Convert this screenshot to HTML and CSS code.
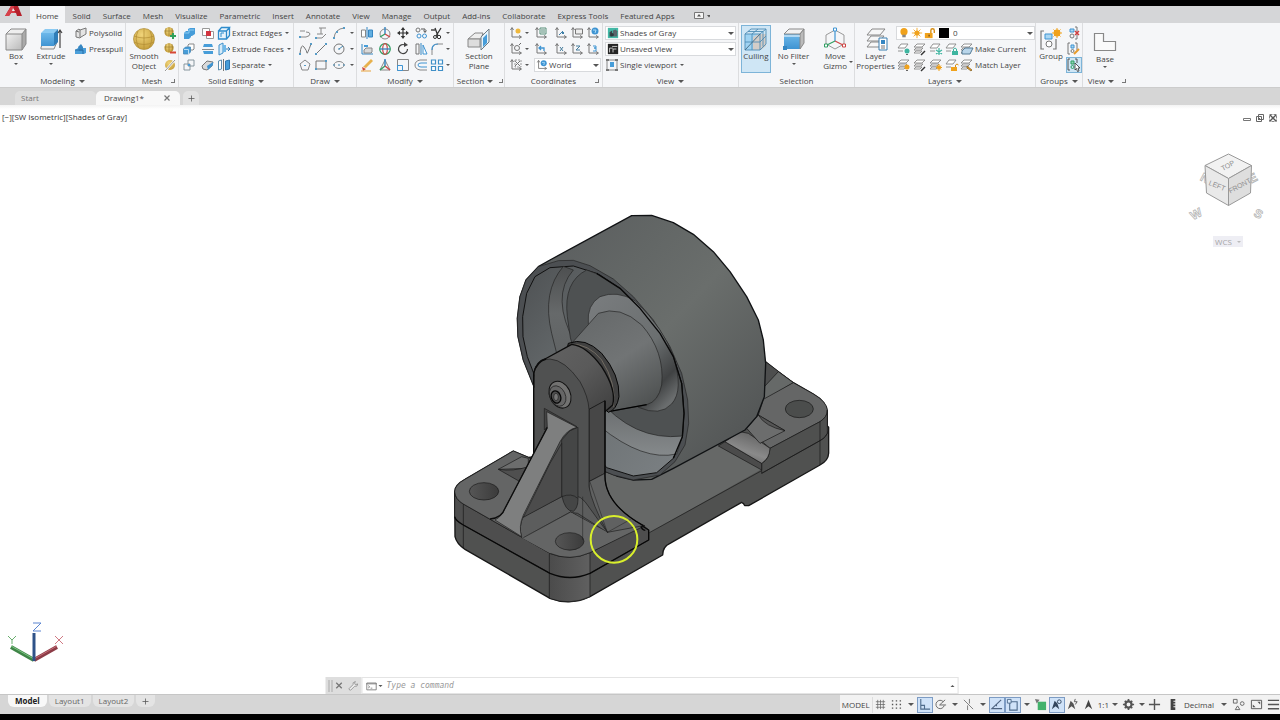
FILE: index.html
```html
<!DOCTYPE html>
<html lang="en">
<head>
<meta charset="utf-8">
<title>Drawing1</title>
<link rel="stylesheet" href="styles.css">
</head>
<body>
<svg class="sprite" aria-hidden="true">
<defs>
<linearGradient id="gBlue" x1="0" y1="0" x2="0" y2="1"><stop offset="0" stop-color="#6db8ea"/><stop offset="1" stop-color="#3f94d2"/></linearGradient>
<radialGradient id="gGold" cx=".4" cy=".3" r=".8"><stop offset="0" stop-color="#f0d47a"/><stop offset="1" stop-color="#c29a35"/></radialGradient>
<linearGradient id="gGrey" x1="0" y1="0" x2="1" y2="1"><stop offset="0" stop-color="#f2f2f2"/><stop offset="1" stop-color="#b9b9b9"/></linearGradient>
</defs>
<symbol id="box" viewBox="0 0 24 24"><path d="M2 7h16v16H2z" fill="url(#gGrey)"/><path d="M2 7l5-5h15l-4 5z" fill="#eee"/><path d="M18 7l4-5v15l-4 6z" fill="#aaa"/><path d="M2 7h16v16H2zM2 7l5-5h15l-4 5M22 2v15l-4 6" fill="none" stroke="#888"/></symbol>
<symbol id="extrude" viewBox="0 0 24 24"><path d="M2 20l4-5h12l-3 7H2z" fill="#eee" stroke="#888"/><path d="M2 6h13v13H2z" fill="url(#gBlue)"/><path d="M2 6l4-4h13l-4 4z" fill="#8bcaf2"/><path d="M15 6l4-4v13l-4 4z" fill="#2f7db8"/><path d="M21 21V4m-2 2l2-3 2 3" fill="none" stroke="#444" stroke-width="1.200"/></symbol>
<symbol id="polysolid" viewBox="0 0 14 14"><path d="M2 5l3-2 1 1 6-2v6l-5 3-1 1-4-1z" fill="#e4e4e4" stroke="#777"/><path d="M6 4v7M2 5l3 1" stroke="#777" fill="none"/></symbol>
<symbol id="presspull" viewBox="0 0 14 14"><path d="M1 8l3-2h8v5l-2 1H1z" fill="#4b9fda"/><path d="M4 5l3-3 2 3v4H5z" fill="#3586c2"/><path d="M1 8h8v4" fill="none" stroke="#2a6ea5"/></symbol>
<symbol id="sphere" viewBox="0 0 24 24"><circle cx="12" cy="12" r="10.500" fill="url(#gGold)" stroke="#ab8a35" stroke-width=".7"/><path d="M2 9q10 4 20 0M2 15q10 5 20 0M12 2v20M6 4q-4 8 1 17M18 4q4 8-1 17" fill="none" stroke="#b18d34" stroke-width=".7"/></symbol>
<symbol id="meshplus" viewBox="0 0 14 14"><circle cx="6" cy="6" r="4.700" fill="url(#gGold)"/><path d="M1.500 5h9M6 1v9M3 2q-1 4 0 7M9 2q1 4 0 7" stroke="#95762a" stroke-width=".6" fill="none"/><path d="M10 7v6M7 10h6" stroke="#2fa05a" stroke-width="2"/></symbol>
<symbol id="meshminus" viewBox="0 0 14 14"><circle cx="6" cy="6" r="4.700" fill="url(#gGold)"/><path d="M1.500 5h9M6 1v9M3 2q-1 4 0 7M9 2q1 4 0 7" stroke="#95762a" stroke-width=".6" fill="none"/><path d="M7 10.500h6" stroke="#d74736" stroke-width="2"/></symbol>
<symbol id="meshno" viewBox="0 0 14 14"><circle cx="7" cy="7" r="5" fill="url(#gGold)"/><path d="M2 13L12 2" stroke="#fff" stroke-width="2"/><path d="M2 13L12 2" stroke="#777" stroke-width=".8"/></symbol>
<symbol id="union" viewBox="0 0 14 14"><path d="M2 7l2-2h2V3l2-1h5v6l-3 2H9v1l-2 2H2z" fill="#479dd9"/><path d="M2 7h5V4h5" stroke="#8dccf2" fill="none"/></symbol>
<symbol id="subtract" viewBox="0 0 14 14"><path d="M6 3l1-1h5v5l-1 1H6z" fill="#fff" stroke="#888"/><path d="M1.500 7l2-2h5v5l-2 2h-5z" fill="#479dd9" stroke="#4688b6" stroke-width=".8"/><path d="M2 7.500h4.500V12" stroke="#b9def5" fill="none"/></symbol>
<symbol id="intersect" viewBox="0 0 14 14"><path d="M6 2h6v6H6zM2 6h6v6H2z" fill="none" stroke="#7d8c95" stroke-width=".9"/><path d="M6 6h2v2H6z" fill="#479dd9"/></symbol>
<symbol id="interfere" viewBox="0 0 14 14"><path d="M1.500 2.500h7v7h-7zM5.500 5.500h7v7h-7z" fill="#fff" stroke="#999"/><path d="M5 5h5v5H5z" fill="#d2343f"/></symbol>
<symbol id="slice" viewBox="0 0 14 14"><path d="M3 2h8l1 3H2zM2 9h10v3H3z" fill="#479dd9"/><path d="M1 7.500h12" stroke="#8a8a8a"/></symbol>
<symbol id="thicken" viewBox="0 0 14 14"><path d="M1 8l5-5 6 1-1 4-5 4-4-1z" fill="#d9d9d9" stroke="#777"/><path d="M6 8l6-4v3l-5 5z" fill="#3f94d2"/></symbol>
<symbol id="xedges" viewBox="0 0 14 14"><path d="M1.500 5h8v8h-8zM1.500 5l3-3.500h8l-3 3.500M12.500 1.500v8l-3 3.500" fill="#e7f4fc" stroke="#2f8ccc" stroke-width="1.300"/><path d="M4 11V7h3" fill="none" stroke="#2f8ccc"/></symbol>
<symbol id="xfaces" viewBox="0 0 14 14"><path d="M2 3l4-2v10l-4 2z" fill="#d6ebf8" stroke="#3c8fca"/><path d="M6 3h3v7H6" fill="#6fb8e8"/><path d="M9 7h4M11 5l2 2-2 2" stroke="#2f78b0" fill="none"/></symbol>
<symbol id="separate" viewBox="0 0 14 14"><path d="M1.500 3l3-1v9l-3 1z" fill="#fff" stroke="#5d8eaf"/><path d="M6.500 1v12" stroke="#777"/><path d="M8.500 3l4-1v9l-4 1z" fill="#479dd9" stroke="#2f78b0"/></symbol>
<symbol id="pline" viewBox="0 0 14 14"><path d="M2 11h6q4-1 4-3t-4-2M2 5h5" fill="none" stroke="#888"/><path d="M1 10h2v2H1z" fill="#579cc7"/></symbol>
<symbol id="poly3d" viewBox="0 0 14 14"><path d="M5 2h7M7 2v6M3 8h6M2 12h6l4-4" fill="none" stroke="#888"/><path d="M1 11h2v2H1z" fill="#579cc7"/></symbol>
<symbol id="arc" viewBox="0 0 14 14"><path d="M2 12Q3 3 12 2" fill="none" stroke="#888"/><path d="M1 11h2v2H1zM4 5h2v2H4zM11 1h2v2h-2z" fill="#579cc7"/></symbol>
<symbol id="spline" viewBox="0 0 14 14"><path d="M2 12Q3 1 6 5t3 6 4-9" fill="none" stroke="#777"/><path d="M1 11h2v2H1zM12 1h2v2h-2z" fill="#579cc7"/></symbol>
<symbol id="line" viewBox="0 0 14 14"><path d="M2 12L12 2" stroke="#777"/><path d="M1 11h2v2H1zM11 1h2v2h-2z" fill="#579cc7"/></symbol>
<symbol id="circle" viewBox="0 0 14 14"><circle cx="7" cy="7" r="5" fill="none" stroke="#777"/><path d="M7 7l4-3M6 7h2" stroke="#4187b1"/></symbol>
<symbol id="polygon" viewBox="0 0 14 14"><path d="M7 2l5 4-2 6H4L2 6z" fill="none" stroke="#888"/><path d="M6 7h2v1H6z" fill="#579cc7"/></symbol>
<symbol id="rect" viewBox="0 0 14 14"><path d="M2 3h10v8H2z" fill="none" stroke="#777"/><path d="M1 10h2v2H1zM11 2h2v2h-2z" fill="#579cc7"/></symbol>
<symbol id="ellipse" viewBox="0 0 14 14"><ellipse cx="7" cy="7" rx="5" ry="3.500" fill="none" stroke="#888"/><path d="M6 7h2M1 7h2M11 7h2" stroke="#4187b1"/></symbol>
<symbol id="mirror3d" viewBox="0 0 14 14"><path d="M1.500 4h4v7h-4z" fill="#fff" stroke="#888"/><path d="M7 1v12" stroke="#3586c2"/><path d="M8.500 4h4v7h-4z" fill="#62afe1" stroke="#3586c2"/></symbol>
<symbol id="gizmomove" viewBox="0 0 14 14"><circle cx="7" cy="8" r="5" fill="none" stroke="#888"/><path d="M7 8V1" stroke="#3586c2" stroke-width="1.400"/><path d="M7 8l-5 3" stroke="#2f9e62" stroke-width="1.400"/><path d="M7 8l5 3" stroke="#cf4545" stroke-width="1.400"/></symbol>
<symbol id="move" viewBox="0 0 14 14"><path d="M7 3v8M3 7h8" stroke="#333" stroke-width="1.200"/><path d="M7 1l2.200 3H4.800zM7 13l2.200-3H4.800zM1 7l3-2.200v4.400zM13 7l-3-2.200v4.400z" fill="#333"/></symbol>
<symbol id="copy" viewBox="0 0 14 14"><circle cx="4" cy="4" r="2" fill="none" stroke="#777"/><circle cx="5" cy="10" r="2" fill="none" stroke="#3f94d2"/><circle cx="10.500" cy="10" r="2" fill="none" stroke="#3f94d2"/><path d="M7 3h4v3M9.500 4.500l1.500 2 1.500-2" fill="none" stroke="#555"/></symbol>
<symbol id="trim" viewBox="0 0 14 14"><path d="M5 2l3 8M11 2L6 10" stroke="#333" stroke-width="1.300"/><circle cx="9" cy="11" r="1.700" fill="none" stroke="#333"/><circle cx="5" cy="11" r="1.500" fill="none" stroke="#333"/><path d="M1 4h4" stroke="#444" stroke-width="1.500"/></symbol>
<symbol id="align3d" viewBox="0 0 14 14"><path d="M2 2v10h11" stroke="#3586c2" fill="none"/><path d="M4 8l2-2h6v4l-1 1H4z" fill="#d9d9d9" stroke="#888"/><path d="M4 3h4v2H4z" fill="#479dd9"/></symbol>
<symbol id="rotate3d" viewBox="0 0 14 14"><circle cx="7" cy="7" r="5.300" fill="none" stroke="#2f9e62" stroke-width="1.200"/><ellipse cx="7" cy="7" rx="2.300" ry="5.300" fill="none" stroke="#c94a4a" stroke-width="1.200"/><path d="M2 7h10" stroke="#3586c2" stroke-width="1.300"/></symbol>
<symbol id="rotate" viewBox="0 0 14 14"><path d="M9 3A4.500 4.500 0 1 0 11.500 7" fill="none" stroke="#444" stroke-width="1.200"/><path d="M8 0l4 3-4 2z" fill="#444"/></symbol>
<symbol id="mirror" viewBox="0 0 14 14"><path d="M2 2h3v10H2z" fill="none" stroke="#777"/><path d="M7 1v12" stroke="#3586c2"/><path d="M9 3v9h4z" fill="#fff" stroke="#3f94d2"/></symbol>
<symbol id="fillet" viewBox="0 0 14 14"><path d="M2 13V8q0-6 6-6h5" fill="none" stroke="#888"/><path d="M2 8q0-6 6-6" fill="none" stroke="#3f94d2" stroke-width="1.200"/></symbol>
<symbol id="erase" viewBox="0 0 14 14"><path d="M3 9l8-8 2 2-7 7z" fill="#e7b14d"/><path d="M2 9l4 2-3 2z" fill="#d04b3c"/><path d="M1 13h10" stroke="#e7a33d"/></symbol>
<symbol id="scale3d" viewBox="0 0 14 14"><path d="M7 2L2 12h10z" fill="none" stroke="#888"/><path d="M7 8V1" stroke="#3586c2" stroke-width="1.500"/><path d="M7 8l-5 4" stroke="#2f9e62" stroke-width="1.500"/><path d="M7 8l5 4" stroke="#cf4545" stroke-width="1.500"/></symbol>
<symbol id="scale" viewBox="0 0 14 14"><path d="M1.500 1.500h11v11h-11z" fill="none" stroke="#888"/><path d="M1.500 7.500h5v5h-5z" fill="none" stroke="#3f94d2"/></symbol>
<symbol id="offset" viewBox="0 0 14 14"><path d="M13 2H6Q1 3 1 7t5 5h7" fill="none" stroke="#888"/><path d="M13 5H7Q4 5 4 7t3 2h6" fill="none" stroke="#3f94d2"/></symbol>
<symbol id="array" viewBox="0 0 14 14"><path d="M1.500 2h4v4h-4zM8.500 2h4v4h-4zM1.500 8.500h4v4h-4zM8.500 8.500h4v4h-4z" fill="#fff" stroke="#3f8fc7" stroke-width="1.200"/></symbol>
<symbol id="section" viewBox="0 0 24 24"><path d="M1 12l7-6h8l-2 6z" fill="#eee" stroke="#888"/><path d="M1 12h12v8H1z" fill="#ddd" stroke="#888"/><path d="M14 10l8-8v13l-8 8z" fill="#e7f4fc" stroke="#6f7b82"/><path d="M16 11l4-4v9l-4 4z" fill="#479dd9"/></symbol>
<symbol id="axes" viewBox="0 0 14 14"><path d="M3 2v9h9M1.500 4L3 1.500 4.500 4M10 9.500L12.500 11 10 12.500" fill="none" stroke="#777" stroke-width="1"/></symbol>
<symbol id="ucsnew" viewBox="0 0 14 14"><use href="#axes"/><circle cx="9" cy="5" r="2.500" fill="#efb83c"/></symbol>
<symbol id="ucsnamed" viewBox="0 0 14 14"><use href="#axes"/><path d="M6 2h6v6H6zM7 4h4M7 6h4" fill="none" stroke="#578e79"/></symbol>
<symbol id="ucsorigin" viewBox="0 0 14 14"><use href="#axes"/><path d="M5 9l4-4" stroke="#3f7fa8"/><path d="M8 6h2v2H8z" fill="#3f7fa8"/></symbol>
<symbol id="ucsview" viewBox="0 0 14 14"><use href="#axes"/><path d="M5.500 3h7v5h-7z" fill="#eee" stroke="#777"/></symbol>
<symbol id="ucsworld" viewBox="0 0 14 14"><use href="#axes"/><circle cx="9" cy="5" r="3.500" fill="#3f94d2"/><path d="M7 4h3l-1 3" stroke="#aadbf8" fill="none"/></symbol>
<symbol id="ucsrot" viewBox="0 0 14 14"><use href="#axes"/><circle cx="8" cy="6" r="2.500" fill="none" stroke="#777"/><path d="M10 3l2-2" stroke="#666"/></symbol>
<symbol id="ucsprev" viewBox="0 0 14 14"><use href="#axes"/><path d="M5 6h5v3M7 4L5 6l2 2" stroke="#3f94d2" stroke-width="1.300" fill="none"/></symbol>
<symbol id="ucsx" viewBox="0 0 14 14"><use href="#axes"/><path d="M6 5l3 4M9 5L6 9" stroke="#467c9c"/></symbol>
<symbol id="ucsz" viewBox="0 0 14 14"><use href="#axes"/><path d="M6 4h4L6 8h4" fill="none" stroke="#467c9c"/></symbol>
<symbol id="ucs3" viewBox="0 0 14 14"><use href="#axes"/><path d="M7 4h3v2H8h2v3H7" fill="none" stroke="#3f94d2"/></symbol>
<symbol id="ucsicon" viewBox="0 0 14 14"><use href="#axes"/><path d="M6 3l5 5M11 3L6 8" stroke="#777"/><path d="M6 2h6v7H6z" fill="none" stroke="#999" stroke-dasharray="2 1"/></symbol>
<symbol id="shades" viewBox="0 0 14 14"><path d="M1 1h12v12H1z" fill="#43b9a7"/><path d="M3 11V6l3-2v7z" fill="#39464b"/><path d="M7 4l3-1 2 2v6H7z" fill="#59656b"/><circle cx="6" cy="9" r="2" fill="#2e393e"/></symbol>
<symbol id="unsaved" viewBox="0 0 14 14"><path d="M1 1h12v12H1z" fill="#252525"/><path d="M3 11V6h4M7 11V7h4M6 4h6" stroke="#ddd" fill="none"/></symbol>
<symbol id="viewport" viewBox="0 0 14 14"><path d="M2 2h10v10H2z" fill="none" stroke="#888"/><path d="M1 1h3v2H1zM10 1h3v2h-3zM1 11h3v2H1zM10 11h3v2h-3z" fill="#777"/><path d="M5 4h4v5H5z" fill="#479dd9"/></symbol>
<symbol id="culling" viewBox="0 0 24 24"><path d="M1 7h15v16H1z" fill="#9fd3f2"/><path d="M9 10l6-3h7v12l-5 4H9z" fill="#d3cdc8"/><path d="M1 7l6-5h15v15l-6 6H1zM1 7h15v16M16 7l6-5M8 7v16M1 15h15l6-6M8 7l6-5M4 4.500h15v15" fill="none" stroke="#4f8db5" stroke-width=".9"/><path d="M1 23L16 7" stroke="#4c718a"/></symbol>
<symbol id="nofilter" viewBox="0 0 24 24"><path d="M2 7h16v15H2z" fill="url(#gBlue)"/><path d="M2 7l5-5h15l-4 5z" fill="#f2f2f2" stroke="#888"/><path d="M18 7l4-5v14l-4 6z" fill="#bbb" stroke="#888"/><path d="M2 9h16" stroke="#fff"/><path d="M1 19h4v4H1z" fill="#3586c2"/></symbol>
<symbol id="gizmo" viewBox="0 0 24 24"><path d="M12 3L3 8v9l9 5 9-5V8z" fill="none" stroke="#999"/><path d="M12 14V4" stroke="#3f94d2" stroke-width="1.200"/><path d="M12 14l-8 4" stroke="#2f9e62" stroke-width="1.200"/><path d="M12 14l8 4" stroke="#cf4545" stroke-width="1.200"/><path d="M10.500 1h3v3h-3z" fill="#fff" stroke="#3f94d2"/><path d="M1.500 17h3v3h-3z" fill="#fff" stroke="#2f9e62"/><path d="M19.500 17h3v3h-3z" fill="#fff" stroke="#cf4545"/></symbol>
<symbol id="layerprops" viewBox="0 0 24 24"><path d="M3 8l5-6h13l-5 6zM3 14l4-5h13l-4 5zM3 20l4-5h12l-4 5z" fill="#f7f7f7" stroke="#888"/><path d="M15 11h8v12h-8z" fill="#fff" stroke="#3b7fb0"/><path d="M17 13h4v4h-4z" fill="#3586c2"/><path d="M17 19h4M17 21h4" stroke="#777"/></symbol>
<symbol id="bulb" viewBox="0 0 14 14"><circle cx="7" cy="5.500" r="4.200" fill="#f0a21c"/><path d="M5 9h4v3H5z" fill="#888"/></symbol>
<symbol id="sun" viewBox="0 0 14 14"><circle cx="7" cy="7" r="3" fill="#f0a21c"/><path d="M7 1v12M1 7h12M3 3l8 8M11 3l-8 8" stroke="#f0a21c"/></symbol>
<symbol id="unlock" viewBox="0 0 14 14"><path d="M1 7h9v6H1z" fill="#f0a21c"/><path d="M8 7V4q0-2 2-2t2 2v3" fill="none" stroke="#d58c12" stroke-width="1.600"/><path d="M5 9h2v2H5z" fill="#8d6220"/></symbol>
<symbol id="sheet" viewBox="0 0 14 14"><path d="M1 6l3-4h7L8 6zM1 9h5" fill="#fff" stroke="#888" stroke-width=".9"/></symbol>
<symbol id="sheets" viewBox="0 0 14 14"><path d="M1 5l3-3h8L9 5zM1 8l2-2h7L8 8zM1 11l2-2h6l-2 2z" fill="#fff" stroke="#888" stroke-width=".9"/></symbol>
<symbol id="layoff" viewBox="0 0 14 14"><use href="#sheet"/><circle cx="10" cy="9" r="2.500" fill="#3eb5a0"/><path d="M9 12h2v1H9z" fill="#666"/></symbol>
<symbol id="layiso" viewBox="0 0 14 14"><use href="#sheets"/><path d="M8 13l4-4" stroke="#333" stroke-width="1.500"/></symbol>
<symbol id="layfrz" viewBox="0 0 14 14"><use href="#sheet"/><path d="M10 6v7M7 8l6 4M13 8l-6 4" stroke="#3eb5a0" stroke-width="1.200"/></symbol>
<symbol id="laylock" viewBox="0 0 14 14"><use href="#sheet"/><path d="M7 9h6v4H7z" fill="#3eb5a0"/><path d="M8.500 9V7q1.500-2 3 0v2" fill="none" stroke="#3eb5a0"/></symbol>
<symbol id="laycur" viewBox="0 0 14 14"><use href="#sheets"/><path d="M2 9l3-3h8l-3 6H2z" fill="#b8d5ea" stroke="#557a94"/></symbol>
<symbol id="layon" viewBox="0 0 14 14"><use href="#sheets"/><circle cx="10" cy="9" r="2.500" fill="#f0a21c"/><path d="M9 12h2v1H9z" fill="#666"/></symbol>
<symbol id="laythw" viewBox="0 0 14 14"><use href="#sheets"/><circle cx="10" cy="9.500" r="2" fill="#f0a21c"/><path d="M10 6v7M7 9.500h6M8 7.500l4 4M12 7.500l-4 4" stroke="#f0a21c"/></symbol>
<symbol id="layunl" viewBox="0 0 14 14"><use href="#sheet"/><path d="M6 9h6v4H6z" fill="#f0a21c"/><path d="M10.500 9V7q1.500-2 3 0" fill="none" stroke="#d58c12"/></symbol>
<symbol id="laymatch" viewBox="0 0 14 14"><use href="#sheets"/><path d="M7 8l5 4-1 1-4-3z" fill="#f0a21c" stroke="#7a5a2a" stroke-width=".7"/></symbol>
<symbol id="group" viewBox="0 0 24 24"><path d="M5 4H2v18h3M14 22h3V12" fill="none" stroke="#777" stroke-width="1.200"/><path d="M6 7h7v5H6z" fill="#a8d6f3" stroke="#3f94d2"/><circle cx="10" cy="17" r="3" fill="#fff" stroke="#777"/><circle cx="18" cy="6" r="3.400" fill="#f0a21c"/><path d="M18 1v10M13 6h10M14.500 2.500l7 7M21.500 2.500l-7 7" stroke="#f0a21c"/></symbol>
<symbol id="ungroup" viewBox="0 0 14 14"><path d="M3 3h4v3H3z" fill="#a8d6f3" stroke="#3f94d2"/><circle cx="5" cy="10" r="2" fill="none" stroke="#777"/><path d="M8 1h2v12H8" fill="none" stroke="#777"/><path d="M8 5l4 4M12 5L8 9" stroke="#d33b3b" stroke-width="1.400"/></symbol>
<symbol id="groupedit" viewBox="0 0 14 14"><path d="M3 1H1v11h2M8 1h2v7" fill="none" stroke="#777"/><path d="M4 3h3v3H4z" fill="#a8d6f3" stroke="#3f94d2"/><circle cx="5.500" cy="9" r="1.500" fill="none" stroke="#777"/><path d="M7 12l5-5" stroke="#e89c2b" stroke-width="2"/></symbol>
<symbol id="groupsel" viewBox="0 0 14 14"><path d="M3 1H1v11h2M8 1h2v4" fill="none" stroke="#555"/><path d="M4 3h3v3H4z" fill="#8fd3b4" stroke="#2f9e62"/><circle cx="5.500" cy="9" r="1.500" fill="none" stroke="#2f9e62"/><path d="M8 5l5 5H11l1 3-1.500.5-1-3L8 12z" fill="#fff" stroke="#333" stroke-width=".8"/></symbol>
<symbol id="base" viewBox="0 0 24 24"><path d="M1.500 3.500h9v8h12v9h-21z" fill="#fafafa" stroke="#888" stroke-width="1.200"/></symbol>
<symbol id="grid" viewBox="0 0 14 14"><path d="M4 2v10M7 2v10M10 2v10M2 4h10M2 7h10M2 10h10" stroke="#666" stroke-width=".8"/></symbol>
<symbol id="dots" viewBox="0 0 14 14"><path d="M2 3h10M2 7h10M2 11h10" stroke="#555" stroke-width="1.400" stroke-dasharray="1.500 2.700"/></symbol>
<symbol id="ortho" viewBox="0 0 14 14"><path d="M3 1v11h10M3 8h4v4" fill="none" stroke="#4f6c8c" stroke-width="1.200"/></symbol>
<symbol id="polar" viewBox="0 0 14 14"><path d="M10 4A4.500 4.500 0 1 0 11 8M6 7.500h7M6 7.500l6-5.500" fill="none" stroke="#666" stroke-width="1"/></symbol>
<symbol id="iso" viewBox="0 0 14 14"><path d="M2 2l10 10M8 1v5M6 13V8" fill="none" stroke="#777" stroke-width="1"/></symbol>
<symbol id="otrack" viewBox="0 0 14 14"><path d="M12 2L2 11.500h11M7 7v2" fill="none" stroke="#4f6480" stroke-width="1.200"/></symbol>
<symbol id="osnap" viewBox="0 0 14 14"><path d="M4 4h8v9H4z" fill="none" stroke="#4f6c8c" stroke-width="1.200"/><path d="M1.500 1.500h4v4h-4z" fill="#d8e9fb" stroke="#4f6c8c"/></symbol>
<symbol id="cycle" viewBox="0 0 14 14"><path d="M4 4h9v9H4z" fill="#43b26b"/><path d="M1 1l5 1-3 4z" fill="#777"/></symbol>
<symbol id="annoa" viewBox="0 0 14 14"><path d="M7 2L3 12l4-3 4 3z" fill="#444"/></symbol>
<symbol id="annovis" viewBox="0 0 14 14"><path d="M5 3L2 12l4-3 4 3-2-6z" fill="#33465e"/><circle cx="10" cy="4" r="2" fill="none" stroke="#33465e"/></symbol>
<symbol id="annoauto" viewBox="0 0 14 14"><path d="M5 3L2 12l4-3 4 3-2-6z" fill="#555"/><path d="M10 1l-1 3h3l-2 3" fill="none" stroke="#555"/></symbol>
<symbol id="gear" viewBox="0 0 14 14"><circle cx="7" cy="7" r="3.300" fill="none" stroke="#555" stroke-width="2.400"/><path d="M7 1v2.500M7 10.500V13M1 7h2.500M10.500 7H13M3 3l1.500 1.500M9.500 9.500L11 11M11 3L9.500 4.500M3 11l1.500-1.500" stroke="#555" stroke-width="1.800"/></symbol>
<symbol id="plus" viewBox="0 0 14 14"><path d="M7 1v12M1 7h12" stroke="#555" stroke-width="1.500"/></symbol>
<symbol id="ruler" viewBox="0 0 14 14"><path d="M5 1h5v2H8v1h2v2H8v1h2v2H8v1h2v3H5z" fill="#444"/></symbol>
<symbol id="isolate" viewBox="0 0 14 14"><path d="M1.500 1.500h4v4h-4z" fill="none" stroke="#666"/><circle cx="11" cy="6" r="2" fill="none" stroke="#666"/><path d="M6 8.500l2.500 4h-5z" fill="none" stroke="#666"/></symbol>
<symbol id="full" viewBox="0 0 14 14"><path d="M1.500 2.500h11v9h-11z" fill="none" stroke="#555"/><path d="M8 4h3v3zM6 10H3V7z" fill="#555"/></symbol>
<symbol id="menu" viewBox="0 0 14 14"><path d="M1 2.500h12M1 7h12M1 11.500h12" stroke="#555" stroke-width="1.500"/></symbol>
<symbol id="wrench" viewBox="0 0 14 14"><path d="M2 11l5-5q-1-3 3-4L9 4l1 2 3-1q0 4-4 3l-5 5q-2 0-2-2z" fill="#eee" stroke="#888"/></symbol>
<symbol id="prompt" viewBox="0 0 14 14"><path d="M1.500 3.500h11v8h-11zM1 4.500h12" fill="#fff" stroke="#777"/><path d="M3 6.500L5 8l-2 1.500M6 9.500h2" fill="none" stroke="#777" stroke-width=".9"/></symbol>
<symbol id="x" viewBox="0 0 14 14"><path d="M3.500 3.500l7 7M10.500 3.500l-7 7" stroke="#777" stroke-width="1.700"/></symbol>
</svg>

<header class="tabbar">
  <svg class="logo" viewBox="0 0 18 11" role="img" aria-label="Application menu"><path d="M6 0h7l4 10h-5l-1-3H6l-2 3H0z" fill="#b5202b"/><path d="M6 0h3l-1 4 3 3H6l-2 3H0z" fill="#d7404a"/><path d="M8 2l2 3H7z" fill="#eee"/></svg>
  <nav class="tabs">
    <button class="tab active">Home</button><button class="tab">Solid</button><button class="tab">Surface</button><button class="tab">Mesh</button><button class="tab">Visualize</button><button class="tab">Parametric</button><button class="tab">Insert</button><button class="tab">Annotate</button><button class="tab">View</button><button class="tab">Manage</button><button class="tab">Output</button><button class="tab">Add-ins</button><button class="tab">Collaborate</button><button class="tab">Express Tools</button><button class="tab">Featured Apps</button>
    <button class="tab mini" aria-label="Minimize ribbon"><svg viewBox="0 0 16 8"><path d="M.5.500h9v6h-9z" fill="#f4f4f4" stroke="#777"/><path d="M5 2l2 2.500H3zM13 3h4l-2 2.500z" fill="#555"/></svg></button>
  </nav>
</header>

<main class="ribbon">
  <section class="panel">
    <div class="body">
      <button class="big w32"><svg><use href="#box"/></svg>Box<i class="caret"></i></button>
      <button class="big w38"><svg><use href="#extrude"/></svg>Extrude<i class="caret"></i></button>
      <div class="stack indent">
        <button class="row"><svg><use href="#polysolid"/></svg>Polysolid</button>
        <button class="row"><svg><use href="#presspull"/></svg>Presspull</button>
      </div>
    </div>
    <h2 class="title">Modeling<i class="caret wide"></i></h2>
  </section>
  <section class="panel">
    <div class="body">
      <button class="big w36"><svg><use href="#sphere"/></svg>Smooth<br>Object</button>
      <div class="stack"><button class="tool" aria-label="Smooth more"><svg><use href="#meshplus"/></svg></button><button class="tool" aria-label="Smooth less"><svg><use href="#meshminus"/></svg></button><button class="tool" aria-label="Refine mesh"><svg><use href="#meshno"/></svg></button></div>
    </div>
    <h2 class="title">Mesh<i class="launch"></i></h2>
  </section>
  <section class="panel">
    <div class="body tools solid">
      <button class="tool" aria-label="Union"><svg><use href="#union"/></svg></button><button class="tool" aria-label="Interfere"><svg><use href="#interfere"/></svg></button><button class="row"><svg><use href="#xedges"/></svg>Extract Edges<i class="caret"></i></button>
      <button class="tool" aria-label="Subtract"><svg><use href="#subtract"/></svg></button><button class="tool" aria-label="Slice"><svg><use href="#slice"/></svg></button><button class="row"><svg><use href="#xfaces"/></svg>Extrude Faces<i class="caret"></i></button>
      <button class="tool" aria-label="Intersect"><svg><use href="#intersect"/></svg></button><button class="tool" aria-label="Thicken"><svg><use href="#thicken"/></svg></button><button class="row"><svg><use href="#separate"/></svg>Separate<i class="caret"></i></button>
    </div>
    <h2 class="title">Solid Editing<i class="caret wide"></i></h2>
  </section>
  <section class="panel">
    <div class="body tools draw">
      <button class="tool" aria-label="Polyline"><svg><use href="#pline"/></svg></button><button class="tool" aria-label="3D polyline"><svg><use href="#poly3d"/></svg></button><button class="tool" aria-label="Arc"><svg><use href="#arc"/></svg></button><i class="caret"></i>
      <button class="tool" aria-label="Spline"><svg><use href="#spline"/></svg></button><button class="tool" aria-label="Line"><svg><use href="#line"/></svg></button><button class="tool" aria-label="Circle"><svg><use href="#circle"/></svg></button><i class="caret"></i>
      <button class="tool" aria-label="Polygon"><svg><use href="#polygon"/></svg></button><button class="tool" aria-label="Rectangle"><svg><use href="#rect"/></svg></button><button class="tool" aria-label="Ellipse"><svg><use href="#ellipse"/></svg></button><i class="caret"></i>
    </div>
    <h2 class="title">Draw<i class="caret wide"></i></h2>
  </section>
  <section class="panel">
    <div class="body tools modify">
      <button class="tool" aria-label="3D mirror"><svg><use href="#mirror3d"/></svg></button><button class="tool" aria-label="3D move"><svg><use href="#gizmomove"/></svg></button><button class="tool" aria-label="Move"><svg><use href="#move"/></svg></button><button class="tool" aria-label="Copy"><svg><use href="#copy"/></svg></button><button class="tool" aria-label="Trim"><svg><use href="#trim"/></svg></button><i class="caret"></i>
      <button class="tool" aria-label="3D align"><svg><use href="#align3d"/></svg></button><button class="tool" aria-label="3D rotate"><svg><use href="#rotate3d"/></svg></button><button class="tool" aria-label="Rotate"><svg><use href="#rotate"/></svg></button><button class="tool" aria-label="Mirror"><svg><use href="#mirror"/></svg></button><button class="tool" aria-label="Fillet"><svg><use href="#fillet"/></svg></button><i class="caret"></i>
      <button class="tool" aria-label="Erase"><svg><use href="#erase"/></svg></button><button class="tool" aria-label="3D scale"><svg><use href="#scale3d"/></svg></button><button class="tool" aria-label="Scale"><svg><use href="#scale"/></svg></button><button class="tool" aria-label="Offset"><svg><use href="#offset"/></svg></button><button class="tool" aria-label="Array"><svg><use href="#array"/></svg></button><i class="caret"></i>
    </div>
    <h2 class="title">Modify<i class="caret wide"></i></h2>
  </section>
  <section class="panel">
    <div class="body center"><button class="big"><svg><use href="#section"/></svg>Section<br>Plane</button></div>
    <h2 class="title launcher">Section<i class="caret wide"></i><i class="launch"></i></h2>
  </section>
  <section class="panel">
    <div class="body tools coords">
      <button class="tool" aria-label="Origin"><svg><use href="#ucsnew"/></svg></button><i class="caret"></i><button class="tool" aria-label="Named UCS"><svg><use href="#ucsnamed"/></svg></button><button class="tool" aria-label="UCS origin"><svg><use href="#ucsorigin"/></svg></button><button class="tool" aria-label="UCS view"><svg><use href="#ucsview"/></svg></button><button class="tool" aria-label="UCS world"><svg><use href="#ucsworld"/></svg></button>
      <button class="tool" aria-label="UCS"><svg><use href="#ucsrot"/></svg></button><i class="caret"></i><button class="tool" aria-label="UCS previous"><svg><use href="#ucsprev"/></svg></button><button class="tool" aria-label="UCS X"><svg><use href="#ucsx"/></svg></button><button class="tool" aria-label="UCS Z"><svg><use href="#ucsz"/></svg></button><button class="tool" aria-label="UCS 3 point"><svg><use href="#ucs3"/></svg></button>
      <button class="tool" aria-label="UCS icon"><svg><use href="#ucsicon"/></svg></button><i class="caret"></i><label class="combo world" aria-label="Coordinate system"><svg><use href="#ucsworld"/></svg><select><option>World</option></select><i class="caret wide"></i></label>
    </div>
    <h2 class="title">Coordinates<i class="launch"></i></h2>
  </section>
  <section class="panel">
    <div class="body stack views">
      <label class="combo" aria-label="Visual style"><svg><use href="#shades"/></svg><select><option>Shades of Gray</option></select><i class="caret wide"></i></label>
      <label class="combo" aria-label="Named view"><svg><use href="#unsaved"/></svg><select><option>Unsaved View</option></select><i class="caret wide"></i></label>
      <button class="row"><svg><use href="#viewport"/></svg>Single viewport<i class="caret"></i></button>
    </div>
    <h2 class="title">View<i class="caret wide"></i></h2>
  </section>
  <section class="panel">
    <div class="body select">
      <button class="big w30 on"><svg><use href="#culling"/></svg>Culling</button>
      <button class="big w44"><svg><use href="#nofilter"/></svg>No Filter<i class="caret"></i></button>
      <button class="big w38"><svg><use href="#gizmo"/></svg>Move<br>Gizmo<i class="caret side"></i></button>
    </div>
    <h2 class="title">Selection</h2>
  </section>
  <section class="panel">
    <div class="body">
      <button class="big w40"><svg><use href="#layerprops"/></svg>Layer<br>Properties</button>
      <div class="stack grow">
        <label class="combo layer" aria-label="Layer"><svg><use href="#bulb"/></svg><svg><use href="#sun"/></svg><svg><use href="#unlock"/></svg><span class="swatch"></span><select><option>0</option></select><i class="caret wide"></i></label>
        <div class="line"><button class="tool" aria-label="Layer off"><svg><use href="#layoff"/></svg></button><button class="tool" aria-label="Isolate"><svg><use href="#layiso"/></svg></button><button class="tool" aria-label="Freeze"><svg><use href="#layfrz"/></svg></button><button class="tool" aria-label="Lock"><svg><use href="#laylock"/></svg></button><button class="row"><svg><use href="#laycur"/></svg>Make Current</button></div>
        <div class="line"><button class="tool" aria-label="Layers on"><svg><use href="#layon"/></svg></button><button class="tool" aria-label="Unisolate"><svg><use href="#layiso"/></svg></button><button class="tool" aria-label="Thaw"><svg><use href="#laythw"/></svg></button><button class="tool" aria-label="Unlock"><svg><use href="#layunl"/></svg></button><button class="row"><svg><use href="#laymatch"/></svg>Match Layer</button></div>
      </div>
    </div>
    <h2 class="title">Layers<i class="caret wide"></i></h2>
  </section>
  <section class="panel">
    <div class="body">
      <button class="big w30"><svg><use href="#group"/></svg>Group</button>
      <div class="stack"><button class="tool" aria-label="Ungroup"><svg><use href="#ungroup"/></svg></button><button class="tool" aria-label="Group edit"><svg><use href="#groupedit"/></svg></button><button class="tool on" aria-label="Group selection"><svg><use href="#groupsel"/></svg></button></div>
    </div>
    <h2 class="title">Groups<i class="caret wide"></i></h2>
  </section>
  <section class="panel last">
    <div class="body center"><button class="big low"><svg><use href="#base"/></svg>Base<i class="caret"></i></button></div>
    <h2 class="title launcher">View<i class="caret wide"></i><i class="launch"></i></h2>
  </section>
</main>

<nav class="files">
  <button class="file start">Start</button>
  <button class="file current">Drawing1*<svg><use href="#x"/></svg></button>
  <button class="file add" aria-label="New drawing"><svg><use href="#plus"/></svg></button>
</nav>

<section class="canvas">
  <div class="viewlabel"><button>[−]</button><button>[SW Isometric]</button><button>[Shades of Gray]</button></div>
  <div class="winctl">
    <button aria-label="Minimize"><svg viewBox="0 0 10 10"><path d="M1.500 5.500h7v2h-7z" fill="#fff" stroke="#777"/></svg></button>
    <button aria-label="Restore"><svg viewBox="0 0 10 10"><path d="M3.500 1.500h5v5h-5zM1.500 3.500h5v5h-5z" fill="none" stroke="#666"/><path d="M3 5h2v2H3z" fill="#666"/></svg></button>
    <button aria-label="Close"><svg viewBox="0 0 10 10"><path d="M1.500 1.500h7v7h-7z" fill="none" stroke="#888" stroke-dasharray="3 1"/><path d="M2 2l6 6M8 2L2 8" stroke="#555" stroke-width="1.400"/></svg></button>
  </div>

  <svg class="model" viewBox="449 210 382 396" role="img" aria-label="Caster wheel assembly">
    <defs>
      <linearGradient id="tire" x1=".1" y1=".1" x2=".85" y2=".85"><stop offset="0" stop-color="#5b5e5f"/><stop offset=".3" stop-color="#636766"/><stop offset=".55" stop-color="#6a6e6c"/><stop offset="1" stop-color="#555858"/></linearGradient>
      <linearGradient id="inner" x1="0" y1="0" x2="1" y2="1"><stop offset="0" stop-color="#4e5153"/><stop offset=".4" stop-color="#676c6e"/><stop offset="1" stop-color="#7c8184"/></linearGradient>
      <linearGradient id="band" x1="0" y1="0" x2="0" y2="1"><stop offset="0" stop-color="#4d4f50"/><stop offset=".25" stop-color="#66696a"/><stop offset=".6" stop-color="#5c5f60"/><stop offset="1" stop-color="#85898b"/></linearGradient>
      <linearGradient id="cone" x1=".2" y1="0" x2=".8" y2="1"><stop offset="0" stop-color="#66696a"/><stop offset=".5" stop-color="#717475"/><stop offset="1" stop-color="#4d5050"/></linearGradient>
      <linearGradient id="hub" x1="0" y1="0" x2=".8" y2="1"><stop offset="0" stop-color="#7a7d7f"/><stop offset=".6" stop-color="#6b6f70"/><stop offset=".86" stop-color="#404243"/><stop offset="1" stop-color="#6a6d6e"/></linearGradient>
      <linearGradient id="cap" x1="0" y1="0" x2="1" y2="1"><stop offset="0" stop-color="#636363"/><stop offset=".5" stop-color="#5a5a5a"/><stop offset="1" stop-color="#3f3f3f"/></linearGradient>
      <linearGradient id="corner" x1="0" y1="0" x2="1" y2="0"><stop offset="0" stop-color="#4b4b4b"/><stop offset="1" stop-color="#606060"/></linearGradient>
      <linearGradient id="hole" x1="0" y1="0" x2="1" y2="0"><stop offset="0" stop-color="#565656"/><stop offset="1" stop-color="#3b3b3b"/></linearGradient>
      <linearGradient id="groove" x1="0" y1="1" x2=".5" y2="0"><stop offset="0" stop-color="#555"/><stop offset=".5" stop-color="#8a8a8a"/><stop offset="1" stop-color="#666"/></linearGradient>
    </defs>
    <g transform="translate(440 340) scale(.33333)" stroke-linejoin="round" stroke="#161616" stroke-width="2">
      <!-- base plate -->
      <path d="M44 455L45 590Q50 612 75 628L330 775Q390 798 450 770L668 645Q668 620 690 610L905 487Q912 490 914 497H926L1140 375Q1165 362 1166 340V262L1162 258V215Q1160 185 1120 162L1060 128L1015 95L970 60L800 150L470 330L265 352L220 333L75 418Q44 435 44 455Z" fill="#505150" stroke-width="4"/>
      <path d="M490 400L860 130L835 318L965 388L628 578L600 560Q500 500 490 400Z" fill="#666867" stroke="none"/>
      <path d="M628 578L965 392" fill="none"/>
      <!-- right foot -->
      <path d="M970 60L1060 128L960 190Z" fill="#4d4e4e"/>
      <path d="M950 165L1015 95L1060 128L965 185Z" fill="#666968"/>
      <path d="M920 265L990 325L1140 245Q1163 230 1162 210Q1160 185 1120 162L1060 128L970 178L955 225Z" fill="#656666"/>
      <path d="M965 400V370Q988 358 990 325L1140 245Q1163 230 1162 210V280Q1155 295 1140 302Z" fill="#4f504f"/>
      <path d="M1140 245V375M965 400L1140 302Q1160 292 1166 270" fill="none"/>
      <path d="M835 318L855 305L965 370V390Z" fill="#4b4b4b"/>
      <path d="M855 305L900 275L925 280L990 325Q989 355 965 370Z" fill="url(#groove)"/>
      <path d="M920 265L955 225L1035 272L960 310Z" fill="#6c6d6d"/>
      <path d="M955 225L1035 272Q975 260 955 225Z" fill="#555"/>
      <ellipse cx="1078" cy="207" rx="42" ry="26" fill="#4b4d4c"/>
      <!-- left foot -->
      <path d="M44 455Q46 480 70 492L330 640Q390 665 450 638L610 556L626 570V600L450 700Q390 725 330 700L70 555Q46 542 44 530Z" fill="#4e4e4e"/>
      <path d="M328 640Q390 665 450 638V770Q390 798 328 775Z" fill="url(#corner)"/>
      <path d="M44 455Q44 435 75 418L220 333L265 352L330 400L450 470L600 555L615 557L450 638Q390 665 330 640L70 492Q46 478 44 455Z" fill="#646565"/>
      <path d="M175 388L245 350L265 355V385Z" fill="#6c6d6d"/>
      <path d="M175 388Q220 395 265 380L240 425Z" fill="#4f4f4f"/>
      <path d="M70 492V625" fill="none"/>
      <path d="M44 530Q46 542 70 555L330 700Q390 725 450 700L626 600V570L602 555Q605 570 616 571" fill="none" stroke="#080808" stroke-width="4"/>
      <ellipse cx="132" cy="454" rx="44" ry="26" fill="url(#hole)"/>
      <ellipse cx="389" cy="604" rx="43" ry="26" fill="url(#hole)"/>
    </g>
    <g transform="translate(500 200) scale(.33333)" stroke-linejoin="round" fill="none" stroke="#222" stroke-width="2">
      <!-- wheel -->
      <path d="M52 355L60 290L78 240L115 200L150 180L395 47L455 46L520 68L580 103L640 155L690 215L740 290L775 360L790 420L797 490L793 590L770 650L735 690L520 805L455 838L400 840L350 828L300 808L100 555L70 480L54 410Z" fill="url(#tire)" stroke="#101214" stroke-width="4"/>
      <path d="M52 355L60 290L78 240L115 200L175 182L220 181L270 197L340 237L400 290L460 360L510 440L545 520L563 600L566 670L555 735L525 785L480 825L400 840L340 825L300 808L100 555L70 480L54 410Z" fill="#4c4f52"/>
      <path d="M68 350L80 280L105 230L150 203L220 198L290 220L360 265L420 325L480 400L520 470L545 550L552 640L547 710L520 775L470 818L400 828L320 803L105 530L82 470L69 410Z" fill="url(#inner)" stroke="#101010" stroke-width="3"/>
      <path d="M190 199Q125 275 155 400L170 460L260 540L550 620L547 710L530 762Q430 785 300 680L225 430Q150 290 220 210Z" fill="url(#band)"/>
      <path d="M260 210Q190 245 202 350Q212 480 290 590Q400 725 548 708L552 640L545 550L520 470L480 400L420 325L360 265L300 225Z" fill="#4e5152"/>
      <path d="M265 370Q260 315 300 290Q350 270 405 302Q495 390 520 470Q552 570 515 612Q480 650 415 622Z" fill="url(#hub)"/>
      <path d="M215 430L295 340Q360 315 425 375Q495 455 485 555Q475 605 440 614L325 635Z" fill="url(#cone)"/>
      <path d="M440 614L325 635" stroke="#000" stroke-width="4"/>
      <path d="M290 220L360 265L420 325L480 400L520 470L545 550L552 640L547 710L520 775" stroke="#080808" stroke-width="4"/>
      <path d="M205 430Q255 410 305 460Q360 525 357 590Q350 630 325 637L190 500Z" fill="#414141" stroke="#050505" stroke-width="3"/>
      <path d="M210 433Q265 430 305 480Q350 550 340 620" stroke="#8a8172" stroke-width="2"/>
    </g>
    <g transform="translate(440 340) scale(.33333)" stroke-linejoin="round" fill="none" stroke="#1c1c1c" stroke-width="2">
      <!-- bracket -->
      <path d="M283 95Q290 65 315 57L395 13Q440 18 485 80Q530 150 518 195L495 215L447 210L330 100Z" fill="url(#cap)" stroke="#0c0c0c" stroke-width="4"/>
      <path d="M447 208L495 182V400L447 425Z" fill="#474747" stroke-width="3"/>
      <path d="M447 425L495 400Q490 490 610 557L502 577L450 490Z" fill="#606161"/>
      <path d="M495 182V400Q490 490 610 557" stroke="#050505" stroke-width="4"/>
      <path d="M283 95Q290 57 330 57Q375 60 420 125Q445 170 447 208V440Q455 490 502 577L400 520L281 420Z" fill="#505151"/>
      <path d="M281 420V100Q290 65 318 57" stroke="#0b0b0b" stroke-width="4"/>
      <path d="M245 593Q235 560 250 530L365 470Q410 455 435 485L502 577L413 520L390 517L250 593Z" fill="#5c5d5d"/>
      <path d="M245 593L390 517L502 577L450 620L330 640Z" fill="#646565" stroke="none"/>
      <path d="M250 593L390 517L413 490"/>
      <ellipse cx="389" cy="604" rx="43" ry="26" fill="url(#hole)"/>
      <path d="M365 300V465Q375 515 400 514Q413 505 414 480V262L390 272Z" fill="#454646"/>
      <path d="M365 310V470L250 532L330 370Z" fill="#4c4c4c"/>
      <path d="M365 470Q395 458 413 475"/>
      <path d="M313 205L411 260L390 272L320 262L313 270Z" fill="#444"/>
      <path d="M320 215L411 262Q380 268 360 305L250 525Q235 560 245 590L165 540Q185 530 195 505L322 262Z" fill="#7e7f7f"/>
      <path d="M150 537Q185 535 195 505L322 262" stroke="#0d0d0d" stroke-width="4"/>
      <path d="M450 426L502 577L572 538M428 470V600" stroke-width="1.500"/>
      <ellipse cx="360" cy="164" rx="31" ry="42" transform="rotate(-25 360 164)" fill="#727271" stroke="#111" stroke-width="3"/>
      <ellipse cx="353" cy="168" rx="23" ry="32" transform="rotate(-25 353 168)" fill="#666"/>
      <ellipse cx="348" cy="171" rx="14" ry="19" transform="rotate(-20 348 171)" fill="#505050" stroke="#080808" stroke-width="4"/>
      <ellipse cx="348" cy="171" rx="7" ry="11" fill="#777"/>
      <circle cx="522" cy="598" r="70" stroke="#d9ef2c" stroke-width="6"/>
    </g>
  </svg>

  <div class="cube">
    <svg viewBox="1186 148 84 78" role="img" aria-label="View cube">
      <g fill="none" stroke="#b5b5b5" stroke-width=".8">
        <text x="1190" y="218" transform="rotate(-28 1196 213)">W</text>
        <text x="1255" y="218" transform="rotate(28 1259 213)">S</text>
        <text x="1201" y="182" transform="rotate(28 1205 178)">N</text>
        <text x="1249" y="182" transform="rotate(-28 1253 178)">E</text>
      </g>
      <g stroke="#999" stroke-width="1">
        <path d="M1205 165.500L1228.500 154L1251.500 165.500L1228.500 178.500Z" fill="#f2f2f2"/>
        <path d="M1205 165.500L1228.500 178.500V205.500L1206.500 193Z" fill="#e9e9e9"/>
        <path d="M1251.500 165.500L1228.500 178.500V205.500L1250.500 193Z" fill="#dedede"/>
      </g>
      <g class="face">
        <text x="1228" y="168" transform="rotate(-28 1228 166)">TOP</text>
        <text x="1217" y="188" transform="rotate(22 1217 186)">LEFT</text>
        <text x="1240" y="188" transform="rotate(-28 1240 186)">FRONT</text>
      </g>
    </svg>
    <button class="wcs">WCS<i class="caret"></i></button>
  </div>

  <svg class="ucs" viewBox="6 618 60 46" role="img" aria-label="UCS axes">
    <path d="M34 660L11 647" stroke="#3f8547" stroke-width="4"/><path d="M34 659L11 646" stroke="#7cc483" stroke-width="1"/>
    <path d="M34 660L57 647" stroke="#8c3c47" stroke-width="4"/><path d="M34 659L57 646" stroke="#c46a74" stroke-width="1"/>
    <path d="M34 661V633" stroke="#2f5288" stroke-width="3"/>
    <path d="M33 623h8l-8 8h8" fill="none" stroke="#5a84d0"/>
    <path d="M8 636l4 4 4-4M12 640v4" fill="none" stroke="#69ae6e"/>
    <path d="M55 636l8 8M63 636l-8 8" stroke="#cf7983"/>
  </svg>

  <form class="command">
    <span class="grip"></span>
    <button type="button" aria-label="Close command line"><svg><use href="#x"/></svg></button>
    <button type="button" aria-label="Customize"><svg><use href="#wrench"/></svg></button>
    <label class="entry"><svg><use href="#prompt"/></svg><i class="caret"></i><input type="text" aria-label="Command" placeholder="Type a command"><i class="caret up"></i></label>
  </form>
</section>

<footer class="status">
  <nav class="layouts"><button class="lay cur">Model</button><button class="lay">Layout1</button><button class="lay">Layout2</button><button class="lay plus" aria-label="New layout"><svg><use href="#plus"/></svg></button></nav>
  <div class="toggles">
    <button class="txt sep">MODEL</button>
    <button aria-label="Grid"><svg><use href="#grid"/></svg></button><button aria-label="Snap"><svg><use href="#dots"/></svg></button><i class="caret wide gap"></i>
    <button class="on" aria-label="Ortho"><svg><use href="#ortho"/></svg></button><button aria-label="Polar tracking"><svg><use href="#polar"/></svg></button><i class="caret wide gap"></i>
    <button aria-label="Isometric drafting"><svg><use href="#iso"/></svg></button><i class="caret wide gap"></i>
    <button class="on" aria-label="Object snap tracking"><svg><use href="#otrack"/></svg></button><button class="on" aria-label="Object snap"><svg><use href="#osnap"/></svg></button><i class="caret wide gap"></i>
    <button aria-label="Selection cycling"><svg><use href="#cycle"/></svg></button>
    <button class="on" aria-label="Annotation visibility"><svg><use href="#annovis"/></svg></button><button aria-label="Auto scale"><svg><use href="#annoauto"/></svg></button><button aria-label="Annotation scale"><svg><use href="#annoa"/></svg></button>
    <button class="txt">1:1<i class="caret wide"></i></button>
    <button class="pad" aria-label="Workspace"><svg><use href="#gear"/></svg></button><i class="caret wide"></i>
    <button class="pad" aria-label="Annotation monitor"><svg><use href="#plus"/></svg></button>
    <button aria-label="Units"><svg><use href="#ruler"/></svg></button><button class="txt units">Decimal<i class="caret wide"></i></button>
    <button aria-label="Isolate objects"><svg><use href="#isolate"/></svg></button><button class="pad" aria-label="Clean screen"><svg><use href="#full"/></svg></button><button class="edge" aria-label="Customization"><svg><use href="#menu"/></svg></button>
  </div>
</footer>
</body>
</html>
```
FILE: styles.css
```css
* { box-sizing: border-box; }
body {
  margin: 0;
  height: 100vh;
  display: flex;
  flex-direction: column;
  border: solid #000;
  border-width: 6px 0;
  background: #fff;
  color: #444;
  font: 8px/10px "Open Sans", "Noto Sans", sans-serif;
  overflow: hidden;
}
button, select, input { font: inherit; color: inherit; background: none; border: 0; padding: 0; margin: 0; }
button { display: flex; align-items: center; justify-content: center; white-space: nowrap; }
svg { display: block; flex: none; width: 14px; height: 14px; }
.sprite { position: absolute; width: 0; height: 0; }

.caret { flex: none; width: 4px; border: 2px solid transparent; border-top-color: #555; border-bottom: 0; }
.caret.wide { width: 6px; border-width: 3px 3px 0; }
.caret.up { border-top: 0; border-bottom: 2px solid #555; }

.tabbar { display: flex; height: 17px; background: #d5d6d8; }
.logo { width: 18px; height: 11px; margin: 0 7px 0 5px; }
.tabs { display: flex; }
.tab { padding: 3px 6px 0; height: 17px; }
.tab.active { background: #f5f6f8; margin-right: 2px; }
.mini { padding-left: 14px; }
.mini svg { width: 16px; height: 8px; }

.ribbon {
  display: grid;
  grid-template-columns: 126px 53px 115px 63px 97px 51px 98px 136px 116px 181px 47px 44px;
  background: #f5f6f8;
  border-bottom: 1px solid #ccc;
}
.panel { display: flex; flex-direction: column; border-right: 1px solid #dcdddf; padding-top: 2px; min-width: 0; }
.panel.last { border-right: 0; }
.body { display: flex; height: 48px; }
.body.center { justify-content: center; }
.title { position: relative; display: flex; align-items: center; justify-content: center; gap: 4px; height: 14px; margin: 0; padding-top: 2px; font-size: 8px; font-weight: 400; }
.title.launcher { padding-right: 8px; gap: 3px; }
.launch { position: absolute; right: 3px; width: 4px; height: 4px; border: solid #777; border-width: 0 1px 1px 0; }
.launcher .launch { right: 1px; }

.big { position: relative; flex-direction: column; justify-content: flex-start; padding-top: 2px; line-height: 10px; height: 48px; }
.big svg { width: 24px; height: 24px; }
.big .caret { margin-top: 2px; }
.big .side { position: absolute; right: 1px; bottom: 10px; }
.low { padding-top: 5px; }
.w30 { width: 30px; }
.w32 { width: 32px; }
.w36 { width: 36px; }
.w38 { width: 38px; }
.w40 { width: 41px; }
.w44 { width: 46px; }
.stack { display: flex; flex-direction: column; }
.indent { padding-left: 4px; }
.grow { flex: 1; }
.row { justify-content: flex-start; gap: 1px; height: 16px; }
.row .caret { margin-left: 2px; }
.line { display: flex; }
.tool { width: 16px; height: 16px; }
.on { background: #cfe6f5; outline: 1px solid #7db4d8; outline-offset: -1px; }

.tools { display: grid; grid-auto-rows: 16px; align-items: center; justify-items: center; justify-content: start; }
.solid { grid-template-columns: 19px 17px auto; justify-items: start; padding-left: 2px; }
.draw { grid-template-columns: 16px 16px 20px 6px; padding-left: 3px; }
.modify { grid-template-columns: 18px 18px 17px 19px 14px 8px; padding-left: 1px; }
.coords { grid-template-columns: 16px 6px 22px 17px 16px 16px; padding-left: 3px; }
.views { padding: 1px 2px 0; gap: 2px; }
.views .row { height: 14px; }
.select { padding-left: 2px; justify-content: space-between; }

.combo { display: flex; align-items: center; height: 14px; background: #fff; border: 1px solid #d8dadd; padding: 0 1px; gap: 1px; }
.combo select { flex: 1; min-width: 0; appearance: none; line-height: 10px; }
.combo svg { width: 12px; height: 12px; }
.world { grid-column: 3 / -1; justify-self: stretch; margin-left: 4px; }
.layer { margin: 1px 0; }
.swatch { width: 10px; height: 10px; margin: 0 3px 0 2px; background: #000; }

.files { display: flex; align-items: flex-end; height: 17px; padding-left: 15px; background: #d6d6d6; }
.file { height: 14px; border-radius: 5px 5px 0 0; }
.start { width: 81px; justify-content: flex-start; padding-left: 6px; color: #777; background: #dfdfdf; }
.current { width: 84px; justify-content: space-between; padding: 0 8px; background: #f8f8f8; }
.file svg { width: 10px; height: 10px; }
.add { width: 16px; margin-left: 3px; background: #e2e2e2; }
.add svg { width: 7px; height: 7px; }

.canvas { position: relative; flex: 1; min-height: 0; display: flex; justify-content: center; align-items: center; padding-top: 17px; background: linear-gradient(#f3f3f3, #fff 4px); }
.model { width: 382px; height: 396px; }
.viewlabel { position: absolute; left: 2px; top: 7px; display: flex; color: #333; }
.winctl { position: absolute; right: 2px; top: 8px; display: flex; gap: 3px; }
.winctl svg { width: 10px; height: 10px; }
.cube { position: absolute; right: 10px; top: 43px; display: flex; flex-direction: column; align-items: center; gap: 10px; }
.cube svg { width: 84px; height: 78px; font: 700 12px "Liberation Sans", sans-serif; }
.face { font-size: 7px; font-weight: 400; fill: #8d8d8d; text-anchor: middle; }
.wcs { gap: 5px; padding: 0 2px; height: 11px; background: #eeeef4; color: #a5a5a5; }
.wcs .caret { border-top-color: #bbb; }
.ucs { position: absolute; left: 6px; bottom: 30px; width: 60px; height: 46px; }

.command { position: absolute; bottom: 0; left: 50%; width: 50%; max-width: 633px; transform: translateX(-50%); display: flex; align-items: center; height: 17px; margin: 0 0 0 2px; background: #dedede; }
.command button { width: 16px; height: 17px; }
.command button svg { width: 11px; height: 11px; }
.command button:first-of-type { width: 12px; }
.grip { width: 4px; height: 12px; margin-left: 3px; border: solid #aaa; border-width: 0 1px; }
.entry { flex: 1; display: flex; align-items: center; height: 17px; padding: 0 3px; margin-left: 1px; background: #fff; border: 1px solid #e4e4e4; }
.entry svg { width: 12px; height: 12px; margin-right: 1px; }
.entry input { flex: 1; min-width: 0; margin-left: 4px; outline: 0; font: italic 8px "DejaVu Sans Mono", monospace; }
.entry input::placeholder { color: #999; }

.status { display: flex; justify-content: space-between; height: 20px; background: #d6d6d6; border-top: 1px solid #c6c6c6; }
.layouts { display: flex; padding-left: 8px; gap: 2px; }
.lay { height: 12px; padding: 0 6px; border-radius: 0 0 6px 6px; background: #e4e4e4; color: #666; }
.lay.cur { padding: 0 7px; background: #f8f8f8; color: #222; font-weight: 700; }
.lay svg { width: 7px; height: 7px; }
.toggles { display: flex; align-items: center; background: #f2f2f2; }
.toggles button { width: 16px; height: 16px; }
.toggles svg { width: 13px; height: 13px; }
.toggles .txt { width: auto; gap: 3px; padding: 0 1px; }
.toggles .sep { width: 33px; border-right: 1px solid #ddd; }
.toggles .gap { margin: 0 3px; }
.toggles .pad { width: 20px; }
.toggles .units { gap: 7px; padding: 0 3px; }
.toggles .edge { width: 14px; }
.toggles .on { background: #cfe2f8; outline-color: #7d9cc4; }
```
